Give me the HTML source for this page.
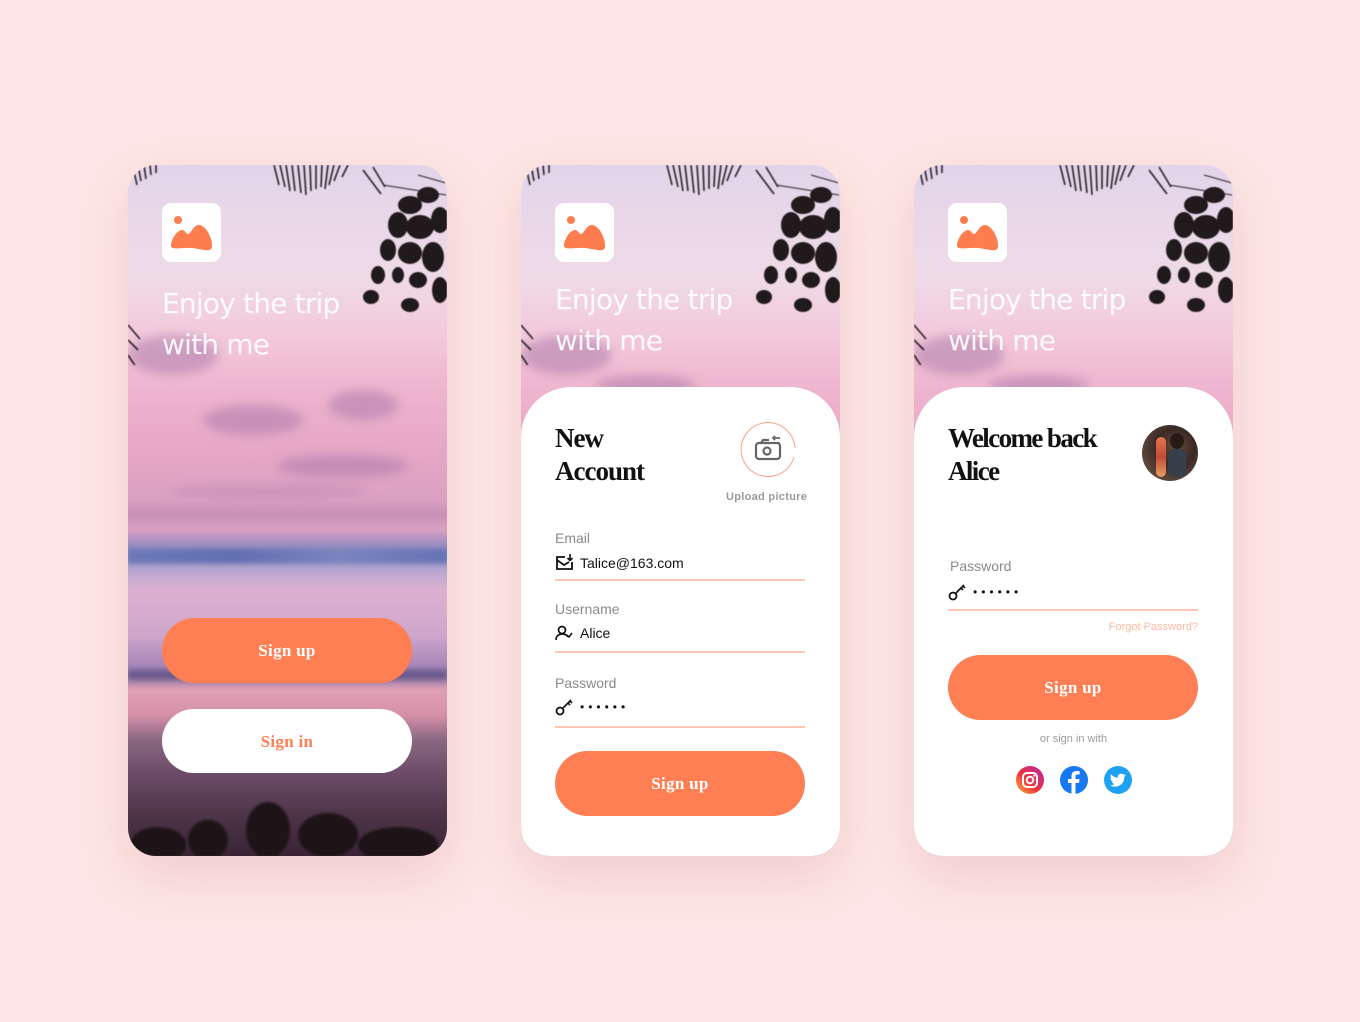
<!DOCTYPE html>
<html><head><meta charset="utf-8"><style>
*{margin:0;padding:0;box-sizing:border-box}
body{width:1360px;height:1022px;background:#fde6e5;position:relative;overflow:hidden;font-family:"Liberation Sans",sans-serif}
.card{position:absolute;top:165px;width:319px;height:691px;border-radius:28px;overflow:hidden;box-shadow:0 20px 50px rgba(200,120,120,.22)}
.photo{position:absolute;left:0;top:0;width:100%;height:691px;background:linear-gradient(180deg,#e3d4ea 0,#efdbe7 110px,#f3c9da 170px,#eeb3cd 230px,#e6a6c6 290px,#dba0c2 335px,#c890b6 350px,#d8a0c2 365px,#9a8cc0 380px,#7f86bb 392px,#b8a6d0 405px,#dcb0d0 425px,#cfa6cc 470px,#a888b8 500px,#8e78a8 510px,#e0a0b6 525px,#d690a8 550px,#8a6882 575px,#6a4a66 610px,#4e3448 650px,#3a2434 691px)}
.cloud{position:absolute;border-radius:50%;background:rgba(160,110,165,.45);filter:blur(5px)}
.title{position:absolute;left:34px;color:rgba(255,255,255,.9);font-family:"DejaVu Sans","Liberation Sans",sans-serif;font-size:28px;line-height:41px;letter-spacing:-.8px}
.logo{position:absolute;left:34px;top:38px;width:59px;height:59px;background:#fff;border-radius:9px}
.btn{position:absolute;left:34px;width:250px;height:65px;border-radius:33px;background:#fe7f54;color:#fff;font-family:"Liberation Serif",serif;font-weight:bold;font-size:17px;text-align:center;line-height:65px;letter-spacing:.3px}
.panel{position:absolute;left:0;top:222px;width:100%;height:469px;background:#fff;border-radius:50px 50px 0 0}
.h{position:absolute;left:34px;top:35px;font-family:"Liberation Serif",serif;font-weight:bold;font-size:27px;line-height:33px;color:#111;letter-spacing:-1px}
.lbl{position:absolute;left:34px;font-size:14px;color:#8a8a8a}
.val{position:absolute;left:34px;font-size:14px;color:#111;display:flex;align-items:center;gap:6px}
.line{position:absolute;left:34px;width:250px;height:2px;background:#ffc6b4}
.fol{position:absolute;left:0;top:0;filter:blur(.6px)}
</style></head><body>

<svg width="0" height="0" style="position:absolute"><defs>
<g id="foliage">
 <g stroke="#2a2226" stroke-width="1.6" fill="none">
  <path d="M5 2 l4 18 M10 0 l3 16 M16 0 l2 14 M22 0 l1 10 M28 0 l0 8"/>
  <path d="M146 0 l5 20 M152 0 l5 22 M158 0 l4 26 M164 0 l3 26 M170 0 l3 28 M176 0 l2 30 M182 0 l1 26 M188 0 l0 24 M194 0 l-1 22 M200 0 l-3 24 M206 0 l-5 20 M212 0 l-6 16 M220 0 l-6 12"/>
  <path d="M235 5 l18 24 M245 2 l12 20"/>
  <path d="M0 160 l12 14 M0 175 l10 10 M0 190 l8 12"/>
 </g>
 <g fill="#201a1c">
  <ellipse cx="282" cy="40" rx="12" ry="9"/><ellipse cx="300" cy="30" rx="11" ry="8"/>
  <ellipse cx="270" cy="60" rx="10" ry="13"/><ellipse cx="292" cy="62" rx="14" ry="12"/>
  <ellipse cx="312" cy="55" rx="9" ry="13"/><ellipse cx="260" cy="85" rx="8" ry="11"/>
  <ellipse cx="282" cy="88" rx="12" ry="11"/><ellipse cx="305" cy="92" rx="11" ry="15"/>
  <ellipse cx="250" cy="110" rx="7" ry="9"/><ellipse cx="290" cy="115" rx="9" ry="8"/>
  <ellipse cx="312" cy="125" rx="8" ry="13"/><ellipse cx="243" cy="132" rx="8" ry="7"/>
  <ellipse cx="282" cy="140" rx="9" ry="7"/><ellipse cx="270" cy="110" rx="6" ry="8"/>
 </g>
 <path d="M255 20 L318 30 M290 10 L318 18" stroke="#2a2226" stroke-width="1"/>
</g>
</defs></svg>

<!-- card 1 -->
<div class="card" style="left:128px">
 <div class="photo">
  <div class="cloud" style="left:75px;top:240px;width:100px;height:30px"></div>
  <div class="cloud" style="left:200px;top:225px;width:70px;height:30px"></div>
  <div class="cloud" style="left:0;top:170px;width:90px;height:40px"></div>
  <div class="cloud" style="left:150px;top:290px;width:130px;height:22px"></div>
  <div class="cloud" style="left:40px;top:320px;width:200px;height:14px;opacity:.6"></div>
  <div style="position:absolute;left:0;top:384px;width:100%;height:14px;background:linear-gradient(90deg,#6a78b8,#5e6cb0,#7a84c0,#6270b4);filter:blur(2px);opacity:.9"></div>
  <div style="position:absolute;left:0;top:505px;width:100%;height:10px;background:#5a4a80;filter:blur(3px);opacity:.7"></div>
  <svg style="position:absolute;left:0;top:620px;filter:blur(1px)" width="319" height="71"><g fill="#1e1418"><ellipse cx="30" cy="60" rx="28" ry="18"/><ellipse cx="80" cy="55" rx="20" ry="20"/><ellipse cx="140" cy="45" rx="22" ry="28"/><ellipse cx="200" cy="50" rx="30" ry="22"/><ellipse cx="270" cy="60" rx="40" ry="18"/></g></svg>
 </div>
 <svg class="fol" width="319" height="200"><use href="#foliage"/></svg>
 <div class="logo"><svg width="59" height="59" viewBox="0 0 59 59"><circle cx="16" cy="17" r="4" fill="#fe7d4f"/><path d="M9 42 C10 34 16 27 20 27 C23 27 24 31 26 31 C29 31 31 22 37 22 C44 22 51 36 50 44 C49 50 40 46 30 45 C20 44 8 48 9 42Z" fill="#fe7d4f"/></svg></div>
 <div class="title" style="top:118px">Enjoy the trip<br>with me</div>
 <div class="btn" style="top:453px">Sign up</div>
 <div class="btn" style="top:544px;height:64px;background:#fff;color:#fe7f54">Sign in</div>
</div>

<!-- card 2 -->
<div class="card" style="left:521px;background:#fff">
 <div class="photo"><div class="cloud" style="left:0;top:170px;width:90px;height:40px"></div><div class="cloud" style="left:75px;top:210px;width:100px;height:20px"></div></div>
 <svg class="fol" width="319" height="200"><use href="#foliage"/></svg>
 <div class="logo"><svg width="59" height="59" viewBox="0 0 59 59"><circle cx="16" cy="17" r="4" fill="#fe7d4f"/><path d="M9 42 C10 34 16 27 20 27 C23 27 24 31 26 31 C29 31 31 22 37 22 C44 22 51 36 50 44 C49 50 40 46 30 45 C20 44 8 48 9 42Z" fill="#fe7d4f"/></svg></div>
 <div class="title" style="top:114px">Enjoy the trip<br>with me</div>
 <div class="panel">
  <div class="h">New<br>Account</div>
  <svg style="position:absolute;left:218px;top:34px" width="60" height="60" viewBox="0 0 60 60"><path d="M56 27 A27 27 0 1 0 55 36" fill="none" stroke="#ff9f80" stroke-width="1"/><rect x="17" y="22" width="24" height="16" rx="3" fill="none" stroke="#666" stroke-width="2.2"/><path d="M22 22 l2-3 h6" fill="none" stroke="#666" stroke-width="2.2"/><circle cx="28" cy="30" r="3.5" fill="none" stroke="#666" stroke-width="2.2"/><path d="M34 17h7M36 15l-2 2 2 2M35 22h6" stroke="#666" stroke-width="1.8" fill="none"/></svg>
  <div style="position:absolute;left:205px;top:104px;font-size:11px;font-weight:bold;color:#9a9a9a;letter-spacing:.3px">Upload picture</div>
  <div class="lbl" style="top:143px">Email</div>
  <div class="val" style="top:167px"><svg width="19" height="17" viewBox="0 0 19 17"><path d="M10 3H2v12h15V8" fill="none" stroke="#111" stroke-width="1.8"/><path d="M2 6l7 5 5-3" fill="none" stroke="#111" stroke-width="1.8"/><path d="M15 0v6M12.5 4l2.5 2.5 2.5-2.5" fill="none" stroke="#111" stroke-width="1.6"/></svg>Talice@163.com</div>
  <div class="line" style="top:192px"></div>
  <div class="lbl" style="top:214px">Username</div>
  <div class="val" style="top:237px"><svg width="19" height="17" viewBox="0 0 19 17"><circle cx="7" cy="6" r="3.5" fill="none" stroke="#111" stroke-width="1.7"/><path d="M1 16c0-4 3-6 6-6s5 1 6 3" fill="none" stroke="#111" stroke-width="1.7"/><path d="M12 11l2 2 3-4" fill="none" stroke="#111" stroke-width="1.5"/></svg>Alice</div>
  <div class="line" style="top:264px"></div>
  <div class="lbl" style="top:288px">Password</div>
  <div class="val" style="top:311px"><svg width="19" height="18" viewBox="0 0 19 18"><circle cx="5" cy="13" r="3.5" fill="none" stroke="#111" stroke-width="1.8"/><path d="M8 10l8-8M13 5l2 2M15 3l2 2" fill="none" stroke="#111" stroke-width="1.6"/></svg><span style="letter-spacing:4px;font-size:12px">••••••</span></div>
  <div class="line" style="top:339px"></div>
  <div class="btn" style="top:364px">Sign up</div>
 </div>
</div>

<!-- card 3 -->
<div class="card" style="left:914px;background:#fff">
 <div class="photo"><div class="cloud" style="left:0;top:170px;width:90px;height:40px"></div><div class="cloud" style="left:75px;top:210px;width:100px;height:20px"></div></div>
 <svg class="fol" width="319" height="200"><use href="#foliage"/></svg>
 <div class="logo"><svg width="59" height="59" viewBox="0 0 59 59"><circle cx="16" cy="17" r="4" fill="#fe7d4f"/><path d="M9 42 C10 34 16 27 20 27 C23 27 24 31 26 31 C29 31 31 22 37 22 C44 22 51 36 50 44 C49 50 40 46 30 45 C20 44 8 48 9 42Z" fill="#fe7d4f"/></svg></div>
 <div class="title" style="top:114px">Enjoy the trip<br>with me</div>
 <div class="panel">
  <div class="h" style="letter-spacing:-1.6px">Welcome back<br>Alice</div>
  <div style="position:absolute;left:228px;top:38px;width:56px;height:56px;border-radius:50%;overflow:hidden;background:radial-gradient(circle at 60% 40%,#6a4a3a 0,#3a2a26 40%,#5a4438 70%,#8a6a56 100%)">
   <div style="position:absolute;left:14px;top:12px;width:10px;height:40px;border-radius:5px;background:linear-gradient(#e8744a,#c44a3a,#e8a060)"></div>
   <div style="position:absolute;left:28px;top:8px;width:14px;height:16px;border-radius:50%;background:#2a1a16"></div>
   <div style="position:absolute;left:26px;top:24px;width:18px;height:28px;border-radius:6px;background:#35404a"></div>
  </div>
  <div class="lbl" style="left:36px;top:171px">Password</div>
  <div class="val" style="top:196px"><svg width="19" height="18" viewBox="0 0 19 18"><circle cx="5" cy="13" r="3.5" fill="none" stroke="#111" stroke-width="1.8"/><path d="M8 10l8-8M13 5l2 2M15 3l2 2" fill="none" stroke="#111" stroke-width="1.6"/></svg><span style="letter-spacing:4px;font-size:12px">••••••</span></div>
  <div class="line" style="top:222px"></div>
  <div style="position:absolute;right:35px;top:234px;font-size:11px;color:#ffb9a0">Forgot Password?</div>
  <div class="btn" style="top:268px">Sign up</div>
  <div style="position:absolute;left:0;width:100%;text-align:center;top:346px;font-size:11px;color:#9a9a9a">or sign in with</div>
  <svg style="position:absolute;left:101px;top:378px" width="30" height="30" viewBox="0 0 30 30"><defs><linearGradient id="ig" x1="0" y1="1" x2="1" y2="0"><stop offset="0" stop-color="#fdb43a"/><stop offset=".45" stop-color="#f0303e"/><stop offset="1" stop-color="#b52aa8"/></linearGradient></defs><circle cx="15" cy="15" r="14" fill="url(#ig)"/><rect x="8" y="8" width="14" height="14" rx="4" fill="none" stroke="#fff" stroke-width="2"/><circle cx="15" cy="15" r="3.3" fill="none" stroke="#fff" stroke-width="2"/><circle cx="19.3" cy="10.7" r="1" fill="#fff"/></svg>
  <svg style="position:absolute;left:145px;top:378px" width="30" height="30" viewBox="0 0 30 30"><circle cx="15" cy="15" r="14" fill="#1877f2"/><path d="M16.5 29V18h3.5l.5-4h-4v-2.5c0-1.2.4-2 2-2h2.2V6.2c-.4 0-1.7-.2-3.2-.2-3.2 0-5 1.9-5 5.3V14H9v4h3.5v11z" fill="#fff"/></svg>
  <svg style="position:absolute;left:189px;top:378px" width="30" height="30" viewBox="0 0 30 30"><circle cx="15" cy="15" r="14" fill="#1da1f2"/><path d="M23 10.2c-.6.3-1.2.4-1.9.5.7-.4 1.2-1 1.4-1.8-.6.4-1.3.6-2.1.8a3.3 3.3 0 0 0-5.6 3A9.3 9.3 0 0 1 8 9.3a3.3 3.3 0 0 0 1 4.4c-.5 0-1-.2-1.5-.4 0 1.6 1.1 2.9 2.6 3.2-.5.1-1 .2-1.500.1.4 1.3 1.6 2.3 3.1 2.3A6.6 6.6 0 0 1 7 20.2 9.3 9.3 0 0 0 21.3 12v-.4c.7-.4 1.2-1 1.7-1.4z" fill="#fff"/></svg>
 </div>
</div>
</body></html>
